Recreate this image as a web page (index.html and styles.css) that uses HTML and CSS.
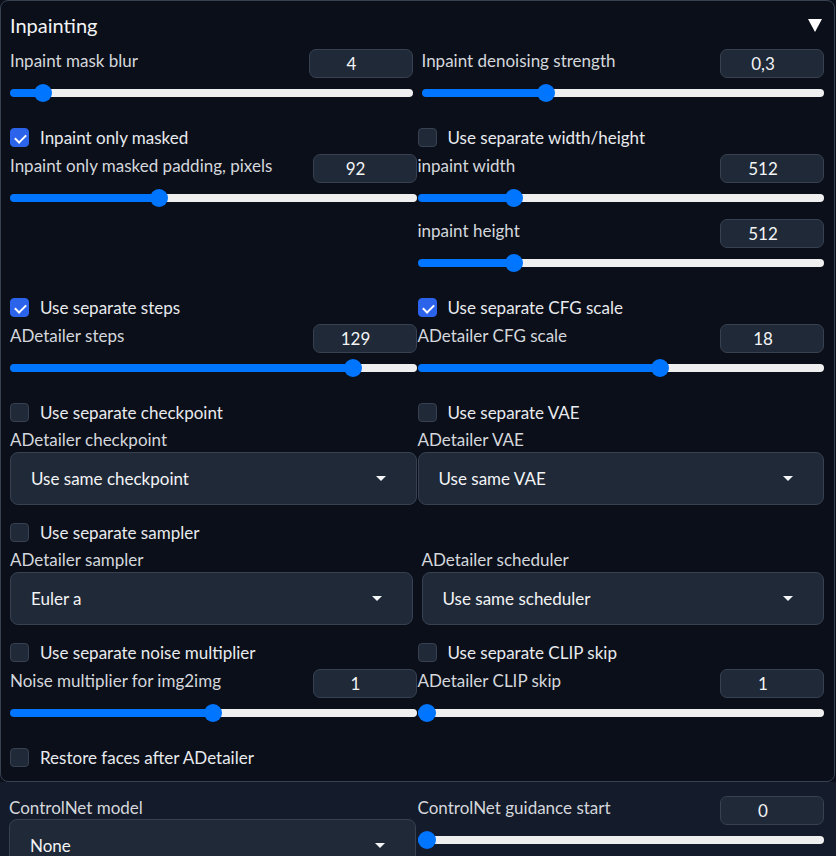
FILE: index.html
```html
<!DOCTYPE html>
<html>
<head>
<meta charset="utf-8">
<link rel="stylesheet" href="styles.css">
</head>
<body>
<div class="panel">
  <div class="title">
    <span>Inpainting</span>
    <svg class="toggle" width="14" height="13" viewBox="0 0 14 13"><polygon points="0,0 14,0 7,13" fill="#fff"/></svg>
  </div>

  <div class="rows">
    <div class="row wide">
      <div class="slider-block">
        <div class="head"><span class="label">Inpaint mask blur</span><span class="num">4</span></div>
        <input class="slider" type="range" min="0" max="64" value="4" style="--v:0.0625">
      </div>
      <div class="slider-block">
        <div class="head"><span class="label">Inpaint denoising strength</span><span class="num">0,3</span></div>
        <input class="slider" type="range" min="0" max="1" step="0.01" value="0.3" style="--v:0.3">
      </div>
    </div>

    <div class="row tight">
      <div class="col">
        <label class="check"><span class="box on"></span>Inpaint only masked</label>
        <div class="slider-block">
          <div class="head"><span class="label">Inpaint only masked padding, pixels</span><span class="num">92</span></div>
          <input class="slider" type="range" min="0" max="256" value="92" style="--v:0.359">
        </div>
      </div>
      <div class="col">
        <label class="check"><span class="box"></span>Use separate width/height</label>
        <div class="slider-block">
          <div class="head"><span class="label">inpaint width</span><span class="num">512</span></div>
          <input class="slider" type="range" min="64" max="2048" value="512" style="--v:0.229">
        </div>
        <div class="slider-block stacked">
          <div class="head"><span class="label">inpaint height</span><span class="num">512</span></div>
          <input class="slider" type="range" min="64" max="2048" value="512" style="--v:0.229">
        </div>
      </div>
    </div>

    <div class="row tight">
      <div class="col">
        <label class="check"><span class="box on"></span>Use separate steps</label>
        <div class="slider-block">
          <div class="head"><span class="label">ADetailer steps</span><span class="num">129</span></div>
          <input class="slider" type="range" min="1" max="150" value="129" style="--v:0.858">
        </div>
      </div>
      <div class="col">
        <label class="check"><span class="box on"></span>Use separate CFG scale</label>
        <div class="slider-block">
          <div class="head"><span class="label">ADetailer CFG scale</span><span class="num">18</span></div>
          <input class="slider" type="range" min="0" max="30" value="18" style="--v:0.598">
        </div>
      </div>
    </div>

    <div class="row tight">
      <div class="col">
        <label class="check"><span class="box"></span>Use separate checkpoint</label>
        <div class="field">
          <span class="label">ADetailer checkpoint</span>
          <div class="dropdown"><span>Use same checkpoint</span><span class="caret"></span></div>
        </div>
      </div>
      <div class="col">
        <label class="check"><span class="box"></span>Use separate VAE</label>
        <div class="field">
          <span class="label">ADetailer VAE</span>
          <div class="dropdown"><span>Use same VAE</span><span class="caret"></span></div>
        </div>
      </div>
    </div>

    <div class="group">
      <label class="check"><span class="box"></span>Use separate sampler</label>
      <div class="row wide">
        <div class="field">
          <span class="label">ADetailer sampler</span>
          <div class="dropdown"><span>Euler a</span><span class="caret"></span></div>
        </div>
        <div class="field">
          <span class="label">ADetailer scheduler</span>
          <div class="dropdown"><span>Use same scheduler</span><span class="caret"></span></div>
        </div>
      </div>
    </div>

    <div class="row tight">
      <div class="col">
        <label class="check"><span class="box"></span>Use separate noise multiplier</label>
        <div class="slider-block">
          <div class="head"><span class="label">Noise multiplier for img2img</span><span class="num">1</span></div>
          <input class="slider" type="range" min="0.5" max="1.5" step="0.01" value="1" style="--v:0.5">
        </div>
      </div>
      <div class="col">
        <label class="check"><span class="box"></span>Use separate CLIP skip</label>
        <div class="slider-block">
          <div class="head"><span class="label">ADetailer CLIP skip</span><span class="num">1</span></div>
          <input class="slider" type="range" min="1" max="12" value="1" style="--v:0">
        </div>
      </div>
    </div>

    <label class="check"><span class="box"></span>Restore faces after ADetailer</label>
  </div>
</div>

<div class="lower">
  <div class="row lower-row">
    <div class="field">
      <span class="label">ControlNet model</span>
      <div class="dropdown"><span>None</span><span class="caret"></span></div>
    </div>
    <div class="slider-block">
      <div class="head"><span class="label">ControlNet guidance start</span><span class="num">0</span></div>
      <input class="slider" type="range" min="0" max="1" step="0.01" value="0" style="--v:0">
    </div>
  </div>
</div>
</body>
</html>
```
FILE: styles.css
```css
* { box-sizing: border-box; }

html, body {
  margin: 0;
  padding: 0;
  background: #0b0f19;
  font-family: "Lato", "Source Sans Pro", "Noto Sans", sans-serif;
  color: #e5e7eb;
  width: 836px;
  height: 856px;
  overflow: hidden;
}

.panel {
  width: 835px;
  border: 1px solid #374151;
  border-radius: 8px;
  padding: 0 10px 14px 9px;
  background: #0b0f19;
}

.title {
  height: 48px;
  display: flex;
  align-items: center;
  justify-content: space-between;
  font-size: 20px;
  color: #f3f4f6;
}

.toggle {
  margin-right: 2px;
}

.rows {
  display: flex;
  flex-direction: column;
  gap: 17px;
}

.row {
  display: grid;
  grid-template-columns: 1fr 1fr;
  align-items: start;
}

.row.wide { gap: 9px; }
.row.tight { gap: 1px; }
.row.lower-row { gap: 2px; }

.col {
  display: flex;
  flex-direction: column;
}

.group {
  display: flex;
  flex-direction: column;
}

.check {
  display: flex;
  align-items: center;
  height: 20px;
  font-size: 17px;
  color: #e8eaee;
  gap: 11px;
}

.box {
  width: 19px;
  height: 19px;
  border-radius: 4px;
  background: #1f2937;
  border: 1px solid #374151;
  flex: none;
  position: relative;
}

.box.on {
  background: #2b63eb;
  border-color: #2b63eb;
}

.box.on::after {
  content: "";
  position: absolute;
  left: 6px;
  top: 3px;
  width: 5px;
  height: 9px;
  border: solid #fff;
  border-width: 0 2.5px 2.5px 0;
  transform: rotate(45deg);
}

.check + .slider-block { margin-top: 7px; }

.slider-block {
  padding-bottom: 8px;
}

.slider-block.stacked { margin-top: 4px; }

.head {
  display: flex;
  justify-content: space-between;
  align-items: flex-start;
  height: 29px;
}

.label {
  font-size: 17px;
  line-height: 20px;
  color: #d4d7dc;
  margin-top: 2px;
  display: block;
}

.num {
  width: 104px;
  height: 29px;
  border: 1px solid #374151;
  border-radius: 7px;
  background: #1f2937;
  color: #f3f4f6;
  font-size: 17px;
  display: flex;
  align-items: center;
  justify-content: center;
  padding-right: 18px;
}

.slider {
  -webkit-appearance: none;
  appearance: none;
  display: block;
  width: 100%;
  height: 18px;
  margin: 6px 0 0 0;
  padding: 0;
  background: transparent;
}

.slider::-webkit-slider-runnable-track {
  height: 8px;
  border-radius: 4px;
  background: linear-gradient(to right, #0075ff calc(9px + (100% - 18px) * var(--v)), #efefef calc(9px + (100% - 18px) * var(--v)));
}

.slider::-webkit-slider-thumb {
  -webkit-appearance: none;
  appearance: none;
  width: 18px;
  height: 18px;
  border-radius: 50%;
  background: #0075ff;
  border: none;
  margin-top: -5px;
}

.field {
  display: flex;
  flex-direction: column;
}

.field .label {
  margin-bottom: 2px;
}

.check + .field .label,
.check + .row .label {
  margin-top: 8px;
}

.dropdown {
  height: 53px;
  border: 1px solid #374151;
  border-radius: 8px;
  background: #1f2937;
  display: flex;
  align-items: center;
  justify-content: space-between;
  padding: 0 30px 0 20px;
  font-size: 17px;
  color: #f3f4f6;
}

.caret {
  width: 0;
  height: 0;
  border-left: 5px solid transparent;
  border-right: 5px solid transparent;
  border-top: 5px solid #f3f4f6;
}

.lower {
  background: #141b2a;
  padding: 14px 12px 0 9px;
  height: 80px;
}

.lower .field .label { margin-top: 2px; margin-bottom: 1px; }
```
